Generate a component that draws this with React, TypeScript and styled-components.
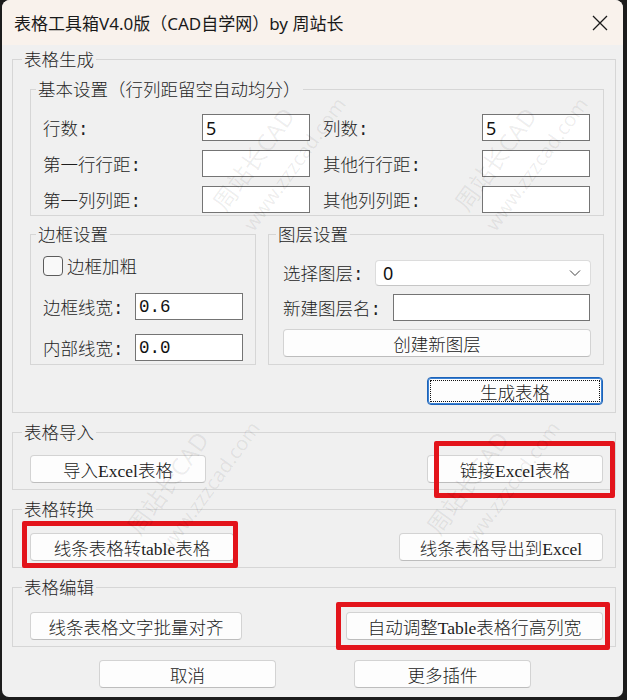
import React from 'react'
import styled, { createGlobalStyle, css } from 'styled-components'

const GlobalStyle = createGlobalStyle`
  html, body {
    margin: 0;
    padding: 0;
    background: #1c1c1c;
  }
  body {
    font-family: "Liberation Mono", "Noto Sans CJK SC", monospace;
  }
`

const Screen = styled.div`
  width: 627px;
  height: 700px;
  background: #1c1c1c;
  overflow: hidden;
`

const Window = styled.div`
  position: relative;
  margin-left: 2px;
  width: 621px;
  height: 697px;
  background: #f0f0f0;
  border-radius: 8px 8px 7px 7px;
  overflow: hidden;
`

const TitleBar = styled.div`
  height: 45px;
  display: flex;
  align-items: center;
  padding-left: 12px;
  background: #f9f2ec;
`

const Title = styled.div`
  font-family: "Noto Sans", "Noto Sans CJK SC", sans-serif;
  font-size: 17px;
  color: #1a1a1a;
  white-space: nowrap;
`

const Close = styled.div`
  margin-left: auto;
  width: 46px;
  height: 45px;
  display: flex;
  align-items: center;
  justify-content: center;
`

const Body = styled.div`
  padding: 2px 7px 0 10px;
`

const Group = styled.fieldset<{ $gap?: number }>`
  margin: ${(p) => p.$gap ?? 0}px 0 0 0;
  padding: 0;
  min-width: 0;
  border: 1px solid #d6d6d6;
`

const Legend = styled.legend<{ $indent: number }>`
  margin-left: ${(p) => p.$indent}px;
  padding: 0 2px;
  font-family: "Noto Sans CJK SC", sans-serif;
  font-weight: 300;
  font-size: 17.5px;
  line-height: 24px;
  color: #1e1e1e;
`

const Pad = styled.div<{ $p: string }>`
  padding: ${(p) => p.$p};
`

const BasicGrid = styled.div`
  display: grid;
  grid-template-columns: 146px 108px 146px 108px;
  column-gap: 13px;
  row-gap: 9px;
  align-items: center;
  padding: 13px 0 2px 12px;
`

const Label = styled.span<{ $w?: number }>`
  font-family: "Liberation Mono", "Noto Sans CJK SC", monospace;
  font-weight: 300;
  font-size: 17.5px;
  color: #1e1e1e;
  white-space: nowrap;
  ${(p) =>
    p.$w &&
    css`
      width: ${p.$w}px;
      flex: none;
    `}
`

const TextBox = styled.input<{ $w?: number; $sans?: boolean }>`
  box-sizing: border-box;
  width: ${(p) => p.$w ?? 108}px;
  height: 27px;
  margin: 0;
  padding: 0 3px;
  border: 1px solid #747474;
  border-radius: 0;
  background: #fff;
  outline: none;
  color: #111;
  font-size: ${(p) => (p.$sans ? 18 : 17.5)}px;
  font-family: ${(p) =>
    p.$sans
      ? '"Noto Sans", "Liberation Sans", sans-serif'
      : '"Liberation Mono", monospace'};
`

const SplitRow = styled.div`
  display: grid;
  grid-template-columns: 226px 1fr;
  column-gap: 12px;
  margin-top: 6px;
`

const Stack = styled.div<{ $gap: number; $p: string }>`
  display: flex;
  flex-direction: column;
  gap: ${(p) => p.$gap}px;
  padding: ${(p) => p.$p};
`

const Line = styled.div`
  display: flex;
  align-items: center;
  height: 27px;
`

const CheckBox = styled.span`
  box-sizing: border-box;
  width: 20px;
  height: 20px;
  margin-right: 4px;
  border: 1px solid #5c5c5c;
  border-radius: 4px;
  background: #f9f9f9;
`

const Select = styled.div`
  box-sizing: border-box;
  flex: 1;
  height: 26px;
  display: flex;
  align-items: center;
  justify-content: space-between;
  padding: 0 9px 0 7px;
  background: #fff;
  border: 1px solid #dcdcdc;
  border-bottom-color: #c6c6c6;
  border-radius: 4px;
  font-family: "Noto Sans", sans-serif;
  font-size: 18px;
  color: #111;
`

const Button = styled.button<{ $w?: number; $focused?: boolean }>`
  box-sizing: border-box;
  width: ${(p) => (p.$w ? `${p.$w}px` : '100%')};
  height: 28px;
  margin: 0;
  padding: 0;
  background: #fdfdfd;
  border: 1px solid #d3d3d3;
  border-bottom-color: #bdbdbd;
  border-radius: 4px;
  color: #1a1a1a;
  font-family: "Liberation Serif", "Noto Sans CJK SC", serif;
  font-weight: 300;
  font-size: 17.5px;
  white-space: nowrap;
  ${(p) =>
    p.$focused &&
    css`
      border: 1px solid #1d63b8;
      box-shadow: inset 0 0 0 1px #3a80d2;
      outline: 1px dotted #111;
      outline-offset: -4px;
    `}
`

const EndRow = styled.div`
  display: flex;
  justify-content: flex-end;
  margin-top: 12px;
  padding-right: 1px;
`

const Spread = styled.div<{ $p: string }>`
  display: flex;
  justify-content: space-between;
  align-items: center;
  padding: ${(p) => p.$p};
`

const Footer = styled.div`
  display: flex;
  gap: 78px;
  margin-top: 13px;
  padding-left: 87px;
`

const Marked = styled.div<{ $t: number; $r: number; $b: number; $l: number }>`
  position: relative;
  &::after {
    content: '';
    position: absolute;
    top: ${(p) => p.$t}px;
    right: ${(p) => p.$r}px;
    bottom: ${(p) => p.$b}px;
    left: ${(p) => p.$l}px;
    border: 5px solid #e3141b;
    border-radius: 2px;
    pointer-events: none;
  }
`

const Watermark = styled.div<{ $x: number; $y: number }>`
  position: absolute;
  left: ${(p) => p.$x}px;
  top: ${(p) => p.$y}px;
  transform: translate(-50%, -50%) rotate(-54deg);
  display: flex;
  flex-direction: column;
  align-items: center;
  gap: 6px;
  color: rgba(0, 0, 0, 0.07);
  font-family: "Noto Sans", "Noto Sans CJK SC", sans-serif;
  pointer-events: none;
  white-space: nowrap;
  span:first-child {
    font-size: 24px;
  }
  span:last-child {
    font-size: 20px;
    margin-left: 40px;
  }
`

const marks = [
  { x: 266, y: 168 },
  { x: 508, y: 168 },
  { x: 180, y: 492 },
  { x: 480, y: 492 },
]

export default function App() {
  return (
    <Screen>
      <GlobalStyle />
      <Window>
        <TitleBar>
          <Title>表格工具箱V4.0版（CAD自学网）by 周站长</Title>
          <Close>
            <svg width="16" height="16" viewBox="0 0 16 16">
              <path d="M1 1 L15 15 M15 1 L1 15" stroke="#1a1a1a" strokeWidth="1.3" fill="none" />
            </svg>
          </Close>
        </TitleBar>

        <Body>
          <Group>
            <Legend $indent={9}>表格生成</Legend>
            <Pad $p="6px 11px 7px 17px">
              <Group>
                <Legend $indent={5}>基本设置（行列距留空自动均分）</Legend>
                <BasicGrid>
                  <Label>行数:</Label>
                  <TextBox $sans defaultValue="5" />
                  <Label>列数:</Label>
                  <TextBox $sans defaultValue="5" />
                  <Label>第一行行距:</Label>
                  <TextBox />
                  <Label>其他行行距:</Label>
                  <TextBox />
                  <Label>第一列列距:</Label>
                  <TextBox />
                  <Label>其他列列距:</Label>
                  <TextBox />
                </BasicGrid>
              </Group>

              <SplitRow>
                <Group>
                  <Legend $indent={5}>边框设置</Legend>
                  <Stack $gap={14} $p="6px 0 3px 12px">
                    <Line>
                      <CheckBox />
                      <Label>边框加粗</Label>
                    </Line>
                    <Line>
                      <Label $w={92}>边框线宽:</Label>
                      <TextBox defaultValue="0.6" />
                    </Line>
                    <Line>
                      <Label $w={92}>内部线宽:</Label>
                      <TextBox defaultValue="0.0" />
                    </Line>
                  </Stack>
                </Group>
                <Group>
                  <Legend $indent={7}>图层设置</Legend>
                  <Stack $gap={8} $p="13px 12px 7px 14px">
                    <Line>
                      <Label $w={92}>选择图层:</Label>
                      <Select>
                        <span>0</span>
                        <svg width="12" height="8" viewBox="0 0 12 8">
                          <path d="M1 1.5 L6 6.5 L11 1.5" stroke="#444" strokeWidth="1" fill="none" />
                        </svg>
                      </Select>
                    </Line>
                    <Line>
                      <Label $w={110}>新建图层名:</Label>
                      <TextBox $w={197} />
                    </Line>
                    <Button>创建新图层</Button>
                  </Stack>
                </Group>
              </SplitRow>

              <EndRow>
                <Button $w={176} $focused>
                  生成表格
                </Button>
              </EndRow>
            </Pad>
          </Group>

          <Group $gap={7}>
            <Legend $indent={9}>表格导入</Legend>
            <Spread $p="11px 12px 6px 17px">
              <Button $w={176}>导入Excel表格</Button>
              <Marked $t={-14} $r={-12} $b={-15} $l={7}>
                <Button $w={176}>链接Excel表格</Button>
              </Marked>
            </Spread>
          </Group>

          <Group $gap={7}>
            <Legend $indent={9}>表格转换</Legend>
            <Spread $p="12px 12px 6px 17px">
              <Marked $t={-12} $r={-4} $b={-7} $l={-8}>
                <Button $w={204}>线条表格转table表格</Button>
              </Marked>
              <Button $w={204}>线条表格导出到Excel</Button>
            </Spread>
          </Group>

          <Group $gap={7}>
            <Legend $indent={9}>表格编辑</Legend>
            <Spread $p="13px 12px 6px 17px">
              <Button $w={212}>线条表格文字批量对齐</Button>
              <Marked $t={-10} $r={-7} $b={-10} $l={-10}>
                <Button $w={257}>自动调整Table表格行高列宽</Button>
              </Marked>
            </Spread>
          </Group>

          <Footer>
            <Button $w={177}>取消</Button>
            <Button $w={177}>更多插件</Button>
          </Footer>
        </Body>

        {marks.map((m, i) => (
          <Watermark key={i} $x={m.x - 2} $y={m.y}>
            <span>周站长CAD</span>
            <span>www.zzzcad.com</span>
          </Watermark>
        ))}
      </Window>
    </Screen>
  )
}
